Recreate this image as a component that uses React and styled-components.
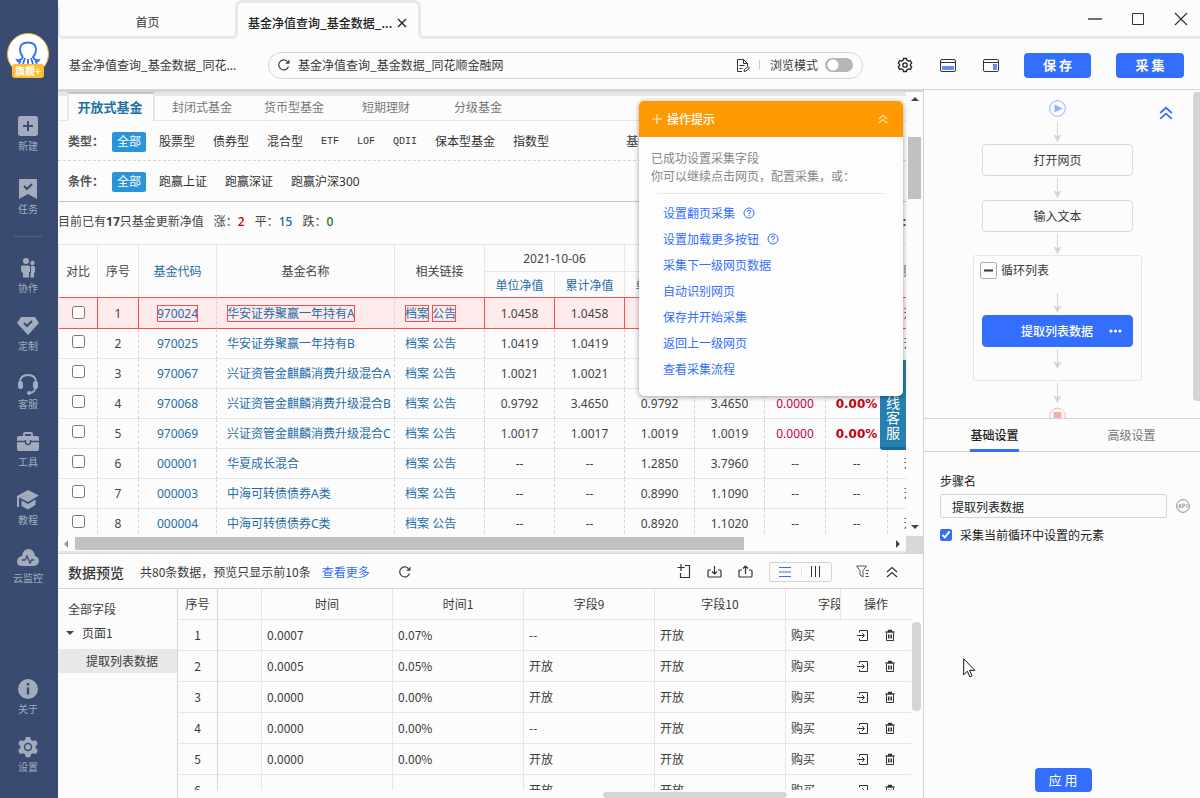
import React from "react";
import styled, { createGlobalStyle, css } from "styled-components";

const blue = "#346eff";
const line = "#e6e6e6";
const lineDark = "#d4d4d4";

const GlobalStyle = createGlobalStyle`
  * { box-sizing: border-box; }
  body {
    margin: 0;
    background: #fcfcfc;
    color: #3a3a3a;
    font: 12px/18px "Noto Sans CJK SC", sans-serif;
  }
  button, input { font: inherit; color: inherit; }
  button { border: 0; padding: 0; background: none; cursor: pointer; }
  a { color: inherit; text-decoration: none; }
  svg { display: block; flex: none; }
`;

const Window = styled.div`
  display: flex;
  height: 100vh;
  overflow: hidden;
`;

/* ---------- sidebar ---------- */

const Sidebar = styled.nav`
  flex: none;
  width: 58px;
  padding: 33px 2px 23px 0;
  display: flex;
  flex-direction: column;
  align-items: center;
  background: #394b70;
`;

const Logo = styled.div`
  display: flex;
  flex-direction: column;
  align-items: center;
  width: 42px;
  height: 46px;
  margin-bottom: 36px;
`;

const LogoDisc = styled.div`
  display: flex;
  justify-content: center;
  flex: none;
  width: 42px;
  height: 42px;
  padding-top: 7px;
  border: 1px solid #f2b23c;
  border-radius: 50%;
  background: #fff;
`;

const LogoBadge = styled.span`
  position: relative;
  margin-top: -11px;
  width: 32px;
  flex: none;
  height: 14px;
  border-radius: 3px;
  background: #fdbf2f;
  color: #fff;
  font-size: 10px;
  font-weight: 700;
  line-height: 14px;
  text-align: center;
`;

const NavItem = styled.button`
  display: flex;
  flex-direction: column;
  align-items: center;
  margin-bottom: ${(p) => (p.$wide ? 24 : 19)}px;
  color: #a3abbd;
  font-size: 10px;
  line-height: 17px;
  &:last-child { margin-bottom: 0; }
  svg + span { padding-top: 1px; line-height: 16px; }
`;

const NavRule = styled.hr`
  width: 28px;
  margin: -5px 0 20px;
  border: 0;
  border-top: 1px solid #56668a;
`;

const Spacer = styled.div`
  flex: 1;
`;

/* ---------- frame ---------- */

const Main = styled.div`
  flex: 1;
  min-width: 0;
  display: flex;
  flex-direction: column;
`;

const TitleBar = styled.header`
  flex: none;
  display: flex;
  height: 39px;
`;

const tabEdge = "3px solid #e8e8e8";

const HomeTab = styled.button`
  width: 180px;
  margin-top: 7px;
  padding-bottom: 0;
  border: ${tabEdge};
  border-width: 0 3px 3px 2px;
  border-radius: 0 0 6px 5px;
`;

const PageTab = styled.div`
  display: flex;
  justify-content: space-between;
  align-items: center;
  width: 186px;
  height: 33px;
  margin: 0 -3px;
  padding: 9px 11px 0 10px;
  border: ${tabEdge};
  border-bottom: 0;
  border-radius: 7px 7px 0 0;
  font-weight: 500;
  color: #222;
`;

const TabFiller = styled.div`
  flex: 1;
  display: flex;
  justify-content: flex-end;
  align-items: center;
  gap: 29px;
  margin-top: 7px;
  padding: 0 12px 6px 0;
  border: ${tabEdge};
  border-width: 0 0 3px 3px;
  border-radius: 0 0 0 6px;
`;

const Toolbar = styled.div`
  flex: none;
  display: flex;
  align-items: center;
  height: 50px;
  padding: 2px 16px 0 11px;
`;

const TaskName = styled.span`
  width: 199px;
  white-space: nowrap;
`;

const AddressBar = styled.div`
  flex: 1;
  display: flex;
  align-items: center;
  height: 27px;
  margin-right: 34px;
  padding: 0 9px;
  border: 1px solid ${lineDark};
  border-radius: 14px;
`;

const AddressInput = styled.input`
  flex: 1;
  min-width: 0;
  margin-left: 8px;
  padding: 0;
  border: 0;
  outline: 0;
  background: none;
`;

const ModeLabel = styled.label`
  display: flex;
  align-items: center;
  gap: 7px;
  margin-left: 9px;
  padding-left: 11px;
  background: linear-gradient(#ccc, #ccc) left center / 1px 10px no-repeat;
`;

const Switch = styled.input`
  appearance: none;
  width: 28px;
  height: 14px;
  margin: 0;
  border-radius: 7px;
  background: radial-gradient(circle at 8px 7px, #fff 5px, transparent 6px) #b5b5b5;
`;

const ToolIcons = styled.div`
  display: flex;
  align-items: center;
  gap: 27px;
  margin-right: 25px;
`;

const Primary = styled.button`
  width: ${(p) => p.$width}px;
  height: ${(p) => (p.$small ? 24 : 25)}px;
  border-radius: 4px;
  background: ${blue};
  color: #fff;
  font-size: 13px;
  font-weight: ${(p) => (p.$small ? 400 : 700)};
`;

const ToolButtons = styled.div`
  display: flex;
  gap: 25px;
`;

const Body = styled.div`
  flex: 1;
  min-height: 0;
  display: flex;
`;

const Work = styled.main`
  flex: 1;
  min-width: 0;
  display: flex;
  flex-direction: column;
`;

/* ---------- embedded web page ---------- */

const Browser = styled.section`
  position: relative;
  flex: 1;
  min-height: 0;
  display: grid;
  grid-template: minmax(0, 1fr) 17px / minmax(0, 1fr) 17px;
  border-top: 3px solid ${lineDark};
`;

const Page = styled.div`
  overflow: hidden;
  color: #444;
  font-family: "Noto Sans", "Noto Sans CJK SC", sans-serif;
`;

const FundTabs = styled.div`
  display: flex;
  height: 29px;
  padding-left: 9px;
  border-top: 4px solid ${line};
  border-bottom: 1px solid ${line};
`;

const FundTab = styled.button`
  width: 92px;
  color: #777;
  ${(p) =>
    p.$active &&
    css`
      width: 88px;
      height: 29px;
      margin: -4px 1px 0 0;
      padding: 0 2px 2px 0;
      border: 2px solid ${line};
      border-top-color: #c4c4c4;
      border-bottom: 0;
      background: #fcfcfc;
      color: #1d73a3;
      font-size: 13px;
      font-weight: 700;
    `}
`;

const FilterRow = styled.div`
  display: flex;
  align-items: center;
  gap: 18px;
  height: ${(p) => (p.$last ? 41 : 40)}px;
  padding: 2px 0 0 10px;
  border-bottom: 1px ${(p) => (p.$last ? "solid #c4c4c4" : "dashed #d4d4d4")};
  white-space: nowrap;
  color: #333;
`;

const FilterName = styled.span`
  width: 26px;
  color: #555;
  font-weight: 700;
`;

const FilterOn = styled.button`
  width: 34px;
  height: 20px;
  margin-right: -5px;
  border-radius: 2px;
  background: #2a94d8;
  color: #fff;
`;

const Option = styled.button`
  ${(p) => p.$mono && `font-family: "Liberation Mono", monospace; font-size: 10px;`}
  ${(p) => p.$far && `margin-left: 59px; color: #555; font-weight: 500;`}
`;

const Summary = styled.p`
  display: flex;
  gap: 10px;
  align-items: center;
  height: 42px;
  margin: 0;
  padding-bottom: 2px;
  white-space: nowrap;
`;

const Count = styled.b`
  font-weight: 500;
  color: ${(p) => p.$color};
`;

const SummaryEnd = styled.b`
  margin-left: auto;
`;

const FundTable = styled.table`
  table-layout: fixed;
  width: 885px;
  border-collapse: separate;
  border-spacing: 0;
  border-top: 1px solid ${line};
  border-left: 1px solid ${line};
  text-align: center;
  white-space: nowrap;
  th {
    height: 27px;
    padding: 2px 0 0;
    border-right: 1px solid ${line};
    font-weight: 400;
  }
  tr:first-child th[colspan] { border-bottom: 1px solid ${line}; }
  tr + tr th { height: 25px; color: #256ca8; }
`;

const LinkHead = styled.th`
  color: #256ca8;
`;

const FundRow = styled.tr`
  td {
    height: 30px;
    padding: 0;
    border-right: 1px dashed ${lineDark};
    border-bottom: 1px solid ${line};
  }
  td:nth-child(4), td:nth-child(5) { padding-left: 10px; text-align: left; }
  a { color: #256ca8; }
  input { display: block; width: 13px; height: 13px; margin: -4px auto 0; }
  ${(p) =>
    p.$picked &&
    css`
      td {
        height: 32px;
        padding-top: 2px;
        border-top: 1px solid #ff4d4d;
        border-bottom-color: #ff4d4d;
        background: #ffebeb;
      }
      td:not(:nth-child(3)):not(:nth-child(4)) { border-right: 1px solid #ff4d4d; }
      td:nth-child(n + 6) { border-right-width: 2px; }
      a { outline: 1px solid #ff4d4d; outline-offset: -1px; }
    `}
`;

const Change = styled.span`
  color: #c7003c;
`;

const ChangeRate = styled.b`
  color: #c40010;
  font: 700 12px/18px "DejaVu Sans", sans-serif;
`;

const Help = styled.aside`
  position: absolute;
  right: 17px;
  bottom: 103px;
  width: 26px;
  height: 90px;
  padding: 20px 6px 0;
  border-bottom: 3px solid #17699b;
  border-radius: 3px 0 0 3px;
  background: #2580b0;
  color: #fff;
  font-size: 14px;
  line-height: 15px;
`;

const VScroll = styled.div`
  display: flex;
  flex-direction: column;
  align-items: center;
  padding: 5px 0 7px;
`;

const VThumb = styled.div`
  width: 13px;
  height: 62px;
  margin: 36px 0 auto;
  background: #c1c1c1;
`;

const HScroll = styled.div`
  display: flex;
  align-items: center;
  padding: 0 6px 0 6px;
  border-bottom: 2px solid ${line};
`;

const HThumb = styled.div`
  width: 80%;
  height: 13px;
  margin: 0 auto 0 7px;
  background: #c1c1c1;
`;

const ScrollCorner = styled.div`
  background: #d8d8d8;
`;

const Triangle = styled.i`
  flex: none;
  border: 4px solid transparent;
  ${(p) => p.$dir === "up" && `border-top: 0; border-bottom-color: #444;`}
  ${(p) => p.$dir === "down" && `border-bottom: 0; border-top-color: #444;`}
  ${(p) => p.$dir === "left" && `border-left: 0; border-right-color: #999;`}
  ${(p) => p.$dir === "right" && `border-right: 0; border-left-color: #444;`}
`;

/* ---------- tip dialog ---------- */

const Tip = styled.section`
  position: absolute;
  top: 9px;
  right: 20px;
  width: 264px;
  height: 295px;
  border-radius: 5px;
  overflow: hidden;
  background: #fdfdfd;
  box-shadow: 0 1px 4px 1px rgba(0, 0, 0, 0.28);
`;

const TipHead = styled.header`
  display: flex;
  align-items: center;
  gap: 5px;
  height: 36px;
  padding: 0 15px 0 13px;
  background: #fe9900;
  color: #fff;
  font-weight: 500;
`;

const TipText = styled.p`
  margin: 12px 18px 8px 12px;
  color: #888;
`;

const TipList = styled.ul`
  margin: 0 18px;
  padding: 6px;
  border-top: 1px solid ${line};
  list-style: none;
  line-height: 26px;
  color: ${blue};
  li { display: flex; align-items: center; gap: 8px; }
`;

/* ---------- data preview ---------- */

const Preview = styled.section`
  flex: none;
  display: flex;
  flex-direction: column;
  height: 245px;
  border-top: 1px solid ${lineDark};
`;

const PreviewHead = styled.header`
  flex: none;
  display: flex;
  align-items: center;
  height: 35px;
  padding: 1px 25px 0 10px;
  border-bottom: 1px solid ${lineDark};
`;

const PreviewTitle = styled.h2`
  margin: 0 16px 0 0;
  font-size: 14px;
  line-height: 18px;
  font-weight: 500;
`;

const MoreLink = styled.a`
  margin: 0 29px 0 11px;
  color: ${blue};
`;

const PreviewTools = styled.div`
  display: flex;
  align-items: center;
  gap: 16px;
  margin-left: auto;
`;

const Segments = styled.div`
  display: flex;
  width: 63px;
  height: 20px;
  border: 1px solid ${lineDark};
  border-radius: 2px;
  margin-right: 8px;
`;

const Segment = styled.button`
  flex: 1;
  display: grid;
  place-items: center;
  & + & { background: linear-gradient(${line}, ${line}) left center / 1px 10px no-repeat; }
`;

const PreviewBody = styled.div`
  flex: 1;
  min-height: 0;
  display: flex;
`;

const FieldTree = styled.div`
  flex: none;
  width: 120px;
  padding-top: 8px;
  border-right: 1px solid ${lineDark};
  line-height: 24px;
`;

const TreeItem = styled.div`
  display: flex;
  align-items: center;
  gap: 8px;
  padding-left: ${(p) => p.$indent}px;
  ${(p) => p.$selected && `margin-top: 4px; background: #e8e8e8;`}
`;

const Grid = styled.div`
  flex: 1;
  min-width: 0;
  display: flex;
  flex-direction: column;
`;

const GridView = styled.div`
  flex: 1;
  min-height: 0;
  display: flex;
  overflow: hidden;
`;

const DataTable = styled.table`
  flex: 1;
  table-layout: fixed;
  width: 100%;
  border-collapse: separate;
  border-spacing: 0;
  align-self: flex-start;
  th, td {
    height: 31px;
    padding: 0 5px;
    border-right: 1px solid ${line};
    border-bottom: 1px solid ${line};
    font-weight: 400;
    overflow: hidden;
    white-space: nowrap;
  }
  th:first-child, td:first-child {
    padding: 0;
    border-right-color: ${lineDark};
    text-align: center;
  }
  td:nth-child(7) { border-right: 0; }
  th:nth-child(7) { padding: 0 0 0 32px; text-align: left; }
  th:last-child, td:last-child { border-right: 0; }
`;

const RowActions = styled.div`
  display: flex;
  justify-content: center;
  gap: 15px;
`;

const RowAction = styled.button`
  display: grid;
  place-items: center;
`;

const GridVBar = styled.div`
  flex: none;
  width: 12px;
  padding: 33px 2px 0 1px;
`;

const GridVThumb = styled.div`
  height: 89px;
  border-radius: 4px;
  background: #d6d6d6;
`;

const GridHBar = styled.div`
  flex: none;
  height: 8px;
  padding-top: 2px;
`;

const GridHThumb = styled.div`
  width: 184px;
  height: 6px;
  margin-left: 57%;
  border-radius: 3px;
  background: #d6d6d6;
`;

/* ---------- workflow panel ---------- */

const Side = styled.aside`
  flex: none;
  display: flex;
  flex-direction: column;
  width: 277px;
  border: 1px solid ${lineDark};
  border-width: 1px 0 0 1px;
`;

const Flow = styled.div`
  position: relative;
  flex: none;
  display: flex;
  height: 329px;
  overflow: hidden;
  border-bottom: 1px solid ${lineDark};
`;

const FlowColumn = styled.div`
  flex: 1;
  display: flex;
  flex-direction: column;
  align-items: center;
  padding-top: 10px;
`;

const FlowBar = styled.div`
  flex: none;
  width: 9px;
  padding: 2px 0 0 2px;
`;

const FlowThumb = styled.div`
  height: 309px;
  border-radius: 4px 0 0 4px;
  background: ${lineDark};
`;

const Collapse = styled.button`
  position: absolute;
  top: 16px;
  right: 27px;
`;

const FlowNode = styled.button`
  flex: none;
  width: 151px;
  height: 32px;
  border: 1px solid #dadada;
  border-radius: 4px;
  ${(p) =>
    p.$active &&
    css`
      display: flex;
      align-items: center;
      justify-content: flex-end;
      gap: 16px;
      padding-right: 10px;
      border-color: ${blue};
      background: ${blue};
      color: #fff;
      font-weight: 500;
    `}
`;

const Loop = styled.div`
  flex: none;
  display: flex;
  flex-direction: column;
  align-items: center;
  width: 169px;
  height: 126px;
  margin-top: -1px;
  padding-top: 5px;
  border: 1px solid ${line};
  border-radius: 3px;
`;

const LoopHead = styled.div`
  display: flex;
  align-items: center;
  align-self: stretch;
  gap: 4px;
  height: 18px;
  margin-bottom: 12px;
  padding-left: 6px;
`;

const PanelTabs = styled.div`
  flex: none;
  display: flex;
  height: 33px;
  padding-left: 2px;
  border-bottom: 1px solid ${lineDark};
`;

const PanelTab = styled.button`
  flex: 1;
  color: ${(p) => (p.$active ? "#222" : "#777")};
  font-weight: ${(p) => (p.$active ? 500 : 400)};
  span { display: inline-block; height: 33px; line-height: 32px; vertical-align: top; }
  ${(p) => p.$active && `span { border-bottom: 3px solid ${blue}; }`}
`;

const Settings = styled.form`
  flex: 1;
  display: flex;
  flex-direction: column;
  padding: 20px 10px 6px 16px;
  color: #222;
`;

const StepRow = styled.div`
  display: flex;
  align-items: center;
  justify-content: space-between;
  margin: 4px 0 8px;
`;

const StepInput = styled.input`
  width: 227px;
  height: 24px;
  padding: 0 11px;
  border: 1px solid ${lineDark};
  border-radius: 2px;
  background: none;
`;

const CheckLabel = styled.label`
  display: flex;
  align-items: center;
  gap: 8px;
  input { width: 12px; height: 12px; margin: 0; accent-color: ${blue}; }
`;

const Apply = styled.div`
  display: flex;
  justify-content: center;
  margin-top: auto;
  padding-right: 4px;
`;

const Cursor = styled.svg`
  position: absolute;
  left: 963px;
  top: 658px;
`;

/* ---------- drawings ---------- */

const Stroke = ({ w = 16, h = w, color = "#333", sw = 1, box, children }) => (
  <svg width={w} height={h} viewBox={box || `0 0 ${w} ${h}`} fill="none" stroke={color} strokeWidth={sw} aria-hidden="true">
    {children}
  </svg>
);

const NavSvg = ({ children }) => (
  <svg width="22" height="22" viewBox="0 0 22 22" fill="#a3abbd" aria-hidden="true">{children}</svg>
);

const hole = { fill: "none", stroke: "#394b70", strokeWidth: 2 };

const navIcons = {
  新建: <><rect x="1" y="1" width="20" height="20" rx="3" /><path d="M11 6v10M6 11h10" {...hole} /></>,
  任务: <><path d="M2 1h18v20l-9-5-9 5z" /><path d="M7 8l3 3 5-5" {...hole} /></>,
  协作: <><circle cx="9" cy="4" r="3" /><circle cx="15.500" cy="6" r="2.200" /><path d="M5.500 8.500h6Q13 8.500 13 10v5h-1v5.500H6V16q-2-1-2-3v-3q0-1.500 1.500-1.500zM14 9h2.500q1.500 0 1.500 1.500V15q0 1-1 1.300v4.200h-3.500V16h.5z" /></>,
  定制: <><path d="M4 2h14l4 6-11 12L0 8z" /><path d="M7 8l3 3 5-5" {...hole} /></>,
  客服: <><path d="M3 12V9.500Q3 2 11 2t8 7.500V12q0 7-6 8" fill="none" stroke="#a3abbd" strokeWidth="1.800" /><rect x="1" y="8" width="5" height="8" rx="2.500" /><rect x="16" y="8" width="5" height="8" rx="2.500" /><circle cx="12" cy="20" r="2" /></>,
  工具: <><path d="M7 6V3q0-1 1-1h6q1 0 1 1v3" fill="none" stroke="#a3abbd" strokeWidth="1.800" /><rect x="0" y="5" width="22" height="15" rx="2" /><path d="M0 10.500h8M14 10.500h8M8.500 9v2q0 2.500 2.500 2.500t2.500-2.500V9" {...hole} strokeWidth="1.300" /></>,
  教程: <><path d="M11 1l11 5.500L11 13 3 9l8-3-9 3v9H0V7z" /><path d="M4.500 11.500L11 15l7.500-4.500V16L11 20.500 4.500 17z" /></>,
  云监控: <><path d="M5 19q-5 0-5-4.500T5 9q1-7 6.500-7T18 9q4 1 4 5t-5 5z" /><path d="M5 13h3l2-4 3 7 1.500-3H17" {...hole} strokeWidth="1.300" /></>,
  关于: <><circle cx="11" cy="11" r="10" /><path d="M11 9.500v7M11 5v2.500" {...hole} strokeWidth="2.400" /></>,
  设置: <><path d="M8.800 1h4.400l.7 2.900 2 1.100 2.900-.8 2 3.800-2.100 2.100v2l2.100 2.100-2 3.800-2.900-.8-2 1.100-.7 2.900H8.800l-.7-2.900-2-1.100-2.900.8-2-3.800 2.100-2.100v-2L1.200 8l2-3.800 2.900.8 2-1.100z" /><circle cx="11" cy="11" r="3.500" {...hole} strokeWidth="1.500" /></>,
};

const Chevrons = ({ color = "#333", w = 12, sw = 1.2 }) => (
  <Stroke w={w} h={w} box="0 0 12 12" color={color} sw={sw}>
    <path d="M1 6l5-4.500L11 6M1 11l5-4.500L11 11" />
  </Stroke>
);

const Refresh = () => (
  <Stroke w={12} color="#444" sw={1.2}>
    <path d="M10.500 7.500A5 5 0 1 1 9.500 2.600" />
    <path d="M11.500.5v4.300H7.200z" fill="#444" stroke="none" />
  </Stroke>
);

const Question = () => (
  <Stroke w={12} color={blue}>
    <circle cx="6" cy="6" r="5" />
    <path d="M4.300 4.800Q4.300 3.200 6 3.200t1.700 1.500Q7.700 5.500 6 6.200V7M6 8v1.200" />
  </Stroke>
);

const Arrow = () => (
  <svg width="11" height="24" viewBox="0 0 11 24" aria-hidden="true">
    <path d="M5.500 2v18" stroke="#d4d4d4" fill="none" />
    <path d="M1.500 14.500l4 1.500 4-1.500-4 7.500z" fill="#d4d4d4" />
  </svg>
);

const NavButton = ({ name, wide }) => (
  <NavItem type="button" $wide={wide}>
    <NavSvg>{navIcons[name]}</NavSvg>
    <span>{name}</span>
  </NavItem>
);

/* ---------- data ---------- */

const funds = [
  ["970024", "华安证券聚赢一年持有A", "1.0458", "1.0458", "1.0419", "1.0419", "0.0039", "0.37%"],
  ["970025", "华安证券聚赢一年持有B", "1.0419", "1.0419", "1.0412", "1.0412", "0.0007", "0.07%"],
  ["970067", "兴证资管金麒麟消费升级混合A", "1.0021", "1.0021", "1.0016", "1.0016", "0.0005", "0.05%"],
  ["970068", "兴证资管金麒麟消费升级混合B", "0.9792", "3.4650", "0.9792", "3.4650", "0.0000", "0.00%"],
  ["970069", "兴证资管金麒麟消费升级混合C", "1.0017", "1.0017", "1.0019", "1.0019", "0.0000", "0.00%"],
  ["000001", "华夏成长混合", "--", "--", "1.2850", "3.7960", "--", "--"],
  ["000003", "中海可转债债券A类", "--", "--", "0.8990", "1.1090", "--", "--"],
  ["000004", "中海可转债债券C类", "--", "--", "0.8920", "1.1020", "--", "--"],
];

const fundCols = [39, 41, 78, 178, 90, 70, 70, 70, 70, 61, 62, 56];

const rows = [
  ["0.0007", "0.07%", "--"],
  ["0.0005", "0.05%", "开放"],
  ["0.0000", "0.00%", "开放"],
  ["0.0000", "0.00%", "--"],
  ["0.0000", "0.00%", "开放"],
  ["", "", "开放"],
];

const tips = [
  ["设置翻页采集", true],
  ["设置加载更多按钮", true],
  ["采集下一级网页数据"],
  ["自动识别网页"],
  ["保存并开始采集"],
  ["返回上一级网页"],
  ["查看采集流程"],
];

/* ---------- sections ---------- */

function FundPage() {
  return (
    <Page>
      <FundTabs>
        <FundTab $active>开放式基金</FundTab>
        {["封闭式基金", "货币型基金", "短期理财", "分级基金"].map((t) => (
          <FundTab key={t}>{t}</FundTab>
        ))}
      </FundTabs>
      <FilterRow>
        <FilterName>类型：</FilterName>
        <FilterOn>全部</FilterOn>
        {["股票型", "债券型", "混合型", "ETF", "LOF", "QDII", "保本型基金", "指数型"].map((t) => (
          <Option key={t} $mono={/^[A-Z]+$/.test(t)}>{t}</Option>
        ))}
        <Option $far>基金公司</Option>
      </FilterRow>
      <FilterRow $last>
        <FilterName>条件：</FilterName>
        <FilterOn>全部</FilterOn>
        {["跑赢上证", "跑赢深证", "跑赢沪深300"].map((t) => (
          <Option key={t}>{t}</Option>
        ))}
      </FilterRow>
      <Summary>
        <span>目前已有<b>17</b>只基金更新净值</span>
        <span>涨：<Count $color="#c40000">2</Count></span>
        <span>平：<Count $color="#256ca8">15</Count></span>
        <span>跌：<Count $color="#0a7a1e">0</Count></span>
        <SummaryEnd>:</SummaryEnd>
      </Summary>
      <FundTable>
        <colgroup>
          {fundCols.map((w, i) => <col key={i} width={w} />)}
        </colgroup>
        <thead>
          <tr>
            <th rowSpan={2}>对比</th>
            <th rowSpan={2}>序号</th>
            <LinkHead rowSpan={2}>基金代码</LinkHead>
            <th rowSpan={2}>基金名称</th>
            <th rowSpan={2}>相关链接</th>
            <th colSpan={2}>2021-10-06</th>
            <th colSpan={2}>2021-09-30</th>
            <th rowSpan={2}>增长值</th>
            <th rowSpan={2}>增长率</th>
            <th rowSpan={2}>购买</th>
          </tr>
          <tr>
            <th>单位净值</th>
            <th>累计净值</th>
            <th>单位净值</th>
            <th>累计净值</th>
          </tr>
        </thead>
        <tbody>
          {funds.map(([code, name, a, b, c, d, diff, rate], i) => (
            <FundRow key={code} $picked={i === 0}>
              <td><input type="checkbox" aria-label={name} /></td>
              <td>{i + 1}</td>
              <td><a href="#fund">{code}</a></td>
              <td><a href="#fund">{name}</a></td>
              <td><a href="#file">档案</a> <a href="#news">公告</a></td>
              <td>{a}</td>
              <td>{b}</td>
              <td>{c}</td>
              <td>{d}</td>
              <td>{diff === "--" ? diff : <Change>{diff}</Change>}</td>
              <td>{rate === "--" ? rate : <ChangeRate>{rate}</ChangeRate>}</td>
              <td>开放</td>
            </FundRow>
          ))}
        </tbody>
      </FundTable>
    </Page>
  );
}

function TipDialog() {
  return (
    <Tip>
      <TipHead>
        <Stroke w={10} color="#ffd79a" sw={1.6}><path d="M5 0v10M0 5h10" /></Stroke>
        操作提示
        <Spacer />
        <Chevrons color="#ffe6c2" w={10} sw={1.4} />
      </TipHead>
      <TipText>
        已成功设置采集字段
        <br />
        你可以继续点击网页，配置采集，或：
      </TipText>
      <TipList>
        {tips.map(([t, help]) => (
          <li key={t}>
            <a href="#tip">{t}</a>
            {help && <Question />}
          </li>
        ))}
      </TipList>
    </Tip>
  );
}

function DataPreview() {
  return (
    <Preview>
      <PreviewHead>
        <PreviewTitle>数据预览</PreviewTitle>
        共80条数据，预览只显示前10条
        <MoreLink href="#more">查看更多</MoreLink>
        <Refresh />
        <PreviewTools>
          <Stroke w={14} h={15} sw={1.2}><path d="M4 0v7M.5 3.500h7M8 1.500h4.500v12h-9V9" /></Stroke>
          <Stroke w={15} h={14} sw={1.2}><path d="M7.500 1v8M5 6.500L7.500 9 10 6.500M4 5H2Q1 5 1 6v5q0 1 1 1h11q1 0 1-1V6q0-1-1-1h-2" /></Stroke>
          <Stroke w={15} h={14} sw={1.2}><path d="M7.500 9V1M5 3.500L7.500 1 10 3.500M4 5H2Q1 5 1 6v5q0 1 1 1h11q1 0 1-1V6q0-1-1-1h-2" /></Stroke>
          <Segments>
            <Segment aria-label="列表">
              <Stroke w={12} h={10} color={blue}><path d="M0 .5h12M0 5h12M0 9.500h12" /></Stroke>
            </Segment>
            <Segment aria-label="分栏">
              <Stroke w={11} h={11}><path d="M1.500 0v11M5.500 0v11M9.500 0v11" /></Stroke>
            </Segment>
          </Segments>
          <Stroke w={14} h={13} color="#555"><path d="M.5 1h10L7 5.500V12l-3-2V5.500zM9.500 5.500H13M9.500 8.500H12M9.500 11.500H13" /></Stroke>
          <Chevrons />
        </PreviewTools>
      </PreviewHead>
      <PreviewBody>
        <FieldTree>
          <TreeItem $indent={10}>全部字段</TreeItem>
          <TreeItem $indent={8}><Triangle $dir="down" />页面1</TreeItem>
          <TreeItem $indent={28} $selected>提取列表数据</TreeItem>
        </FieldTree>
        <Grid>
          <GridView>
            <DataTable>
              <colgroup>
                {[40, 44, 131, 131, 131, 131, null, 70].map((w, i) => (
                  <col key={i} width={w || undefined} />
                ))}
              </colgroup>
              <thead>
                <tr>
                  {["序号", "", "时间", "时间1", "字段9", "字段10", "字段11", "操作"].map((t, i) => (
                    <th key={i}>{t}</th>
                  ))}
                </tr>
              </thead>
              <tbody>
                {rows.map(([a, b, c], i) => (
                  <tr key={i}>
                    <td>{i + 1}</td>
                    <td />
                    <td>{a}</td>
                    <td>{b}</td>
                    <td>{c}</td>
                    <td>开放</td>
                    <td>购买</td>
                    <td>
                      <RowActions>
                        <RowAction aria-label="导出">
                          <Stroke w={12} h={13}><path d="M2.500 3.500V1.500h8v10h-8v-2M0 6.500h7M5 4l2.500 2.500L5 9" /></Stroke>
                        </RowAction>
                        <RowAction aria-label="删除">
                          <Stroke w={12} h={13}><path d="M1.500 3h9M4 1.500h4" strokeWidth="1.400" /><path d="M2.500 4v7.500h7V4M4.500 5.500v4M6 5.500v4M7.500 5.500v4" /></Stroke>
                        </RowAction>
                      </RowActions>
                    </td>
                  </tr>
                ))}
              </tbody>
            </DataTable>
            <GridVBar><GridVThumb /></GridVBar>
          </GridView>
          <GridHBar><GridHThumb /></GridHBar>
        </Grid>
      </PreviewBody>
    </Preview>
  );
}

function Workflow() {
  return (
    <Flow>
      <FlowColumn>
        <svg width="19" height="20" viewBox="0 0 19 20" aria-hidden="true">
          <circle cx="9.500" cy="8.500" r="7.800" fill="none" stroke="#8fb0fb" />
          <path d="M6.500 4.500l8 4-8 4z" fill="#8fb0fb" />
        </svg>
        <Arrow />
        <FlowNode>打开网页</FlowNode>
        <Arrow />
        <FlowNode>输入文本</FlowNode>
        <Arrow />
        <Loop>
          <LoopHead>
            <Stroke w={17} color="#aaa">
              <rect x=".5" y=".5" width="16" height="16" rx="2" />
              <path d="M4 8.500h9" stroke="#333" strokeWidth="2" />
            </Stroke>
            循环列表
          </LoopHead>
          <Arrow />
          <FlowNode $active>
            提取列表数据
            <svg width="13" height="4" viewBox="0 0 13 4" fill="#fff" aria-hidden="true">
              <circle cx="2" cy="2" r="1.600" /><circle cx="6.500" cy="2" r="1.600" /><circle cx="11" cy="2" r="1.600" />
            </svg>
          </FlowNode>
          <Arrow />
        </Loop>
        <Arrow />
        <svg width="19" height="20" viewBox="0 0 19 20" aria-hidden="true">
          <circle cx="9.500" cy="11" r="7.800" fill="none" stroke="#f3b9b0" />
          <rect x="5.500" y="7" width="8" height="8" fill="#eeb0ac" />
        </svg>
      </FlowColumn>
      <FlowBar><FlowThumb /></FlowBar>
      <Collapse aria-label="收起"><Chevrons color={blue} w={14} sw={1.5} /></Collapse>
    </Flow>
  );
}

export default function App() {
  return (
    <Window>
      <GlobalStyle />
      <Sidebar>
        <Logo>
          <LogoDisc>
            <Stroke w={26} h={24} color={blue} sw={1.8}>
              <path d="M8 16Q5 13 5 8.500 5 1.500 13 1.500t8 7Q21 13 18 16q2 4 6 3-1 2-3 2l1 2M8 16q-2 4-6 3 1 2 3 2l-1 2M10 17l-2 6M16 17l2 6M13 18v5" />
            </Stroke>
          </LogoDisc>
          <LogoBadge>旗舰+</LogoBadge>
        </Logo>
        <NavButton name="新建" wide />
        <NavButton name="任务" wide />
        <NavRule />
        {["协作", "定制", "客服", "工具", "教程", "云监控"].map((n) => <NavButton key={n} name={n} />)}
        <Spacer />
        {["关于", "设置"].map((n) => <NavButton key={n} name={n} />)}
      </Sidebar>
      <Main>
        <TitleBar>
          <HomeTab>首页</HomeTab>
          <PageTab>
            基金净值查询_基金数据_...
            <button aria-label="关闭标签"><Stroke w={10} sw={1.4} color="#222"><path d="M1 1l8 8M9 1L1 9" /></Stroke></button>
          </PageTab>
          <TabFiller>
            <button aria-label="最小化"><Stroke w={14} sw={1.4}><path d="M0 7h14" /></Stroke></button>
            <button aria-label="最大化"><Stroke w={14}><path d="M1.500 1.500h11v11h-11z" /></Stroke></button>
            <button aria-label="关闭"><Stroke w={14} sw={1.2}><path d="M1 1l12 12M13 1L1 13" /></Stroke></button>
          </TabFiller>
        </TitleBar>
        <Toolbar>
          <TaskName>基金净值查询_基金数据_同花...</TaskName>
          <AddressBar>
            <Refresh />
            <AddressInput aria-label="网页地址" defaultValue="基金净值查询_基金数据_同花顺金融网" />
            <Stroke w={14} h={15}>
              <path d="M6 13.500H1.500V1.500h6l4 4V8M7.500 1.500v4h4M3.500 7.500h5M3.500 10.500h3" />
              <path d="M8 13.500l.5-2L12 8.500l1.500 1.500-3.500 3z" />
            </Stroke>
            <ModeLabel>浏览模式<Switch type="checkbox" role="switch" /></ModeLabel>
          </AddressBar>
          <ToolIcons>
            <Stroke w={16} sw={1.3} color="#222">
              <path d="M6.500 1.500h3l.5 1.800 1.300.8 1.900-.5 1.500 2.500L13.400 7.400v1.200l1.300 1.300-1.500 2.500-1.900-.5-1.300.8-.5 1.800h-3L6 12.700l-1.300-.8-1.900.5L1.300 9.900l1.300-1.300V7.400L1.300 6.100l1.500-2.500 1.900.5L6 3.300z" />
              <circle cx="8" cy="8" r="2.200" />
            </Stroke>
            <Stroke w={16} h={13}>
              <rect x=".5" y=".5" width="15" height="12" rx="1.500" /><path d="M.5 3.500h15" /><path d="M2 7h12v4H2z" fill="#5b8bff" stroke="none" />
            </Stroke>
            <Stroke w={16} h={13}>
              <rect x=".5" y=".5" width="15" height="12" rx="1.500" /><path d="M.5 3.500h15" /><path d="M10 5h4v6h-4z" fill="#5b8bff" stroke="none" />
            </Stroke>
          </ToolIcons>
          <ToolButtons>
            <Primary $width={67}>保 存</Primary>
            <Primary $width={68}>采 集</Primary>
          </ToolButtons>
        </Toolbar>
        <Body>
          <Work>
            <Browser>
              <FundPage />
              <VScroll>
                <Triangle $dir="up" />
                <VThumb />
                <Triangle $dir="down" />
              </VScroll>
              <HScroll>
                <Triangle $dir="left" />
                <HThumb />
                <Triangle $dir="right" />
              </HScroll>
              <ScrollCorner />
              <Help>在线客服</Help>
              <TipDialog />
            </Browser>
            <DataPreview />
          </Work>
          <Side>
            <Workflow />
            <PanelTabs>
              <PanelTab $active><span>基础设置</span></PanelTab>
              <PanelTab><span>高级设置</span></PanelTab>
            </PanelTabs>
            <Settings onSubmit={(e) => e.preventDefault()}>
              <label htmlFor="step-name">步骤名</label>
              <StepRow>
                <StepInput id="step-name" defaultValue="提取列表数据" />
                <Stroke w={14} color="#888">
                  <circle cx="7" cy="7" r="6.300" />
                  <path d="M2.800 9l1.200-4 1.200 4M3.200 8h1.600M6.700 9V5h1.200q1 0 1 1.100t-1 1.100H6.700M10.800 5v4" strokeWidth=".8" />
                </Stroke>
              </StepRow>
              <CheckLabel><input type="checkbox" defaultChecked />采集当前循环中设置的元素</CheckLabel>
              <Apply><Primary $small $width={57}>应 用</Primary></Apply>
            </Settings>
          </Side>
        </Body>
      </Main>
      <Cursor width="13" height="20" viewBox="0 0 13 20" fill="#fff" stroke="#111">
        <path d="M.7.8v16l3.600-3.600 2.500 5.600 2.200-1-2.500-5.500h5.300z" />
      </Cursor>
    </Window>
  );
}
